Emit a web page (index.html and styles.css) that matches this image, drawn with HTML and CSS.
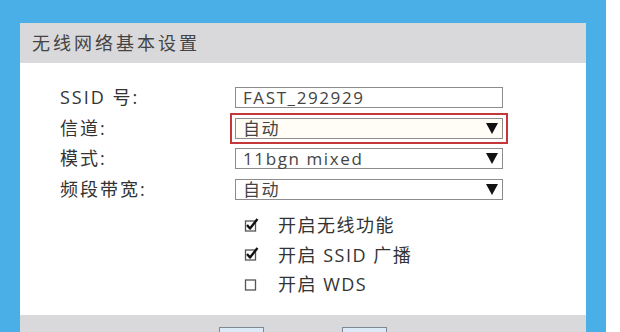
FILE: index.html
```html
<!DOCTYPE html>
<html lang="zh-CN">
<head>
  <meta charset="UTF-8">
  <meta name="viewport" content="width=device-width, initial-scale=1.0">
  <title>无线网络基本设置</title>
  <link rel="stylesheet" href="styles.css">
</head>
<body>
  <div class="screen">
    <div class="panel">
      <div class="panel-head">无线网络基本设置</div>
      <div class="panel-body">
        <div class="form">
          <div class="label">SSID 号:</div>
          <div class="field"><span>FAST_292929</span></div>

          <div class="label">信道:</div>
          <div class="field select focused"><span>自动</span><i class="arrow"></i></div>

          <div class="label">模式:</div>
          <div class="field select"><span>11bgn mixed</span><i class="arrow"></i></div>

          <div class="label">频段带宽:</div>
          <div class="field select"><span>自动</span><i class="arrow"></i></div>
        </div>

        <ul class="checks">
          <li>
            <svg class="box" width="15" height="15" viewBox="0 0 15 15">
              <rect x="1.5" y="4" width="10" height="10" fill="none" stroke="#555" stroke-width="1.3"/>
              <path d="M3 8 L6 11.5 L13.5 2" fill="none" stroke="#111" stroke-width="2.4" stroke-linejoin="round"/>
            </svg>
            <span>开启无线功能</span>
          </li>
          <li>
            <svg class="box" width="15" height="15" viewBox="0 0 15 15">
              <rect x="1.5" y="4" width="10" height="10" fill="none" stroke="#555" stroke-width="1.3"/>
              <path d="M3 8 L6 11.5 L13.5 2" fill="none" stroke="#111" stroke-width="2.4" stroke-linejoin="round"/>
            </svg>
            <span>开启 SSID 广播</span>
          </li>
          <li>
            <svg class="box" width="15" height="15" viewBox="0 0 15 15">
              <rect x="1.5" y="4" width="10" height="10" fill="none" stroke="#555" stroke-width="1.3"/>
            </svg>
            <span>开启 WDS</span>
          </li>
        </ul>
      </div>
      <div class="panel-foot">
        <button class="btn"></button>
        <button class="btn"></button>
      </div>
    </div>
  </div>
</body>
</html>
```

FILE: styles.css
```css
html, body {
  margin: 0;
  height: 332px;
  overflow: hidden;
  background: #fff;
  font-family: "Open Sans", "Noto Sans CJK SC", sans-serif;
}
.screen {
  width: 566px;
  height: 332px;
  padding: 23px 20px 0;
  background: #4aafe6;
}
.panel {
  background: #fff;
}
.panel-head {
  height: 40px;
  line-height: 40px;
  padding-left: 12px;
  background: #d9d9db;
  color: #444;
  font-size: 18px;
  letter-spacing: 3px;
}
.panel-body {
  height: 252px;
  box-sizing: border-box;
  padding-top: 24px;
}
.form {
  display: grid;
  grid-template-columns: 175px 268px;
  grid-auto-rows: 21px;
  row-gap: 9.5px;
  align-items: center;
  padding-left: 40px;
}
.label {
  color: #333;
  font-size: 18px;
  letter-spacing: 2px;
  line-height: 21px;
}
.field {
  position: relative;
  height: 21px;
  box-sizing: border-box;
  border: 1px solid #8c8c8c;
  padding-left: 7px;
  color: #444;
  font-size: 17px;
  line-height: 19px;
  letter-spacing: 1.6px;
}
.focused {
  background: #fffdf6;
  outline: 2px solid #c4383c;
  outline-offset: 3px;
}
.arrow {
  position: absolute;
  right: 4px;
  top: 4px;
  width: 0;
  height: 0;
  border-left: 6px solid transparent;
  border-right: 6px solid transparent;
  border-top: 11px solid #111;
}
.checks {
  list-style: none;
  margin: 10px 0 0;
  padding-left: 224px;
}
.checks li {
  display: flex;
  align-items: center;
  height: 29.5px;
  gap: 19px;
  color: #333;
  font-size: 18px;
  letter-spacing: 1.5px;
}
.box {
  display: block;
}
.panel-foot {
  display: flex;
  justify-content: center;
  gap: 78px;
  height: 40px;
  padding-top: 12px;
  box-sizing: border-box;
  background: #d9d9db;
}
.btn {
  width: 45px;
  height: 22px;
  padding: 0;
  border: 1px solid #7d8a96;
  background: #dce9f6;
}
```
